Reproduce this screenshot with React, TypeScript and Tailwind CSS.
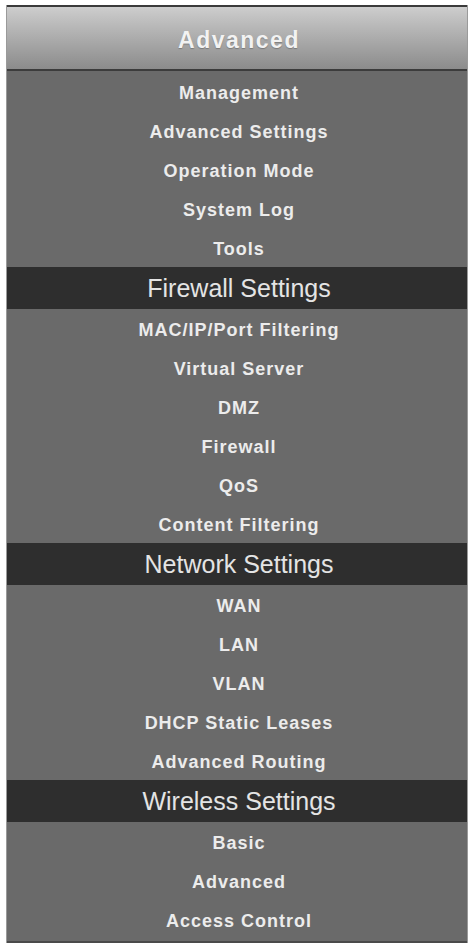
import React from 'react';

type Section = { title: string; items: string[] };

const topItems = ['Management', 'Advanced Settings', 'Operation Mode', 'System Log', 'Tools'];

const sections: Section[] = [
  {
    title: 'Firewall Settings',
    items: ['MAC/IP/Port Filtering', 'Virtual Server', 'DMZ', 'Firewall', 'QoS', 'Content Filtering'],
  },
  {
    title: 'Network Settings',
    items: ['WAN', 'LAN', 'VLAN', 'DHCP Static Leases', 'Advanced Routing'],
  },
  {
    title: 'Wireless Settings',
    items: ['Basic', 'Advanced', 'Access Control'],
  },
];

const MenuItem: React.FC<{ label: string }> = ({ label }) => (
  <a
    href="#"
    className="flex h-[39px] items-center justify-center pl-1 pt-[3px] text-[18px] font-bold tracking-[1px] text-[#ececec] hover:text-white"
  >
    {label}
  </a>
);

const SectionHeader: React.FC<{ title: string }> = ({ title }) => (
  <div className="flex h-[42px] items-center justify-center bg-[#2e2e2e] pl-1 pt-[2px] text-[25px] text-[#e4e4e4]">
    {title}
  </div>
);

export default function App() {
  return (
    <div className="min-h-screen bg-white pt-[5px]" style={{ fontFamily: '"Liberation Sans", Arial, sans-serif' }}>
      <div className="ml-[6px] w-[462px] border-x border-[#9a9a9a] bg-[#6a6a6a]">
        <div className="flex h-[64px] items-center justify-center border-t-2 border-[#3a3a3a] bg-gradient-to-b from-[#cdcdcd] to-[#8c8c8c] pl-1 pt-[4px]">
          <span className="text-[23px] font-bold tracking-[1.5px] text-[#f2f2f2] [text-shadow:0_1px_1px_rgba(0,0,0,0.25)]">
            Advanced
          </span>
        </div>
        <div className="h-[2px] bg-[#3c3c3c]" />
        <nav className="flex flex-col pt-[1px] pb-[2px]">
          {topItems.map((item) => (
            <MenuItem key={item} label={item} />
          ))}
          {sections.map((section) => (
            <React.Fragment key={section.title}>
              <SectionHeader title={section.title} />
              {section.items.map((item) => (
                <MenuItem key={item} label={item} />
              ))}
            </React.Fragment>
          ))}
        </nav>
        <div className="h-[2px] bg-[#4a4a4a]" />
      </div>
    </div>
  );
}
